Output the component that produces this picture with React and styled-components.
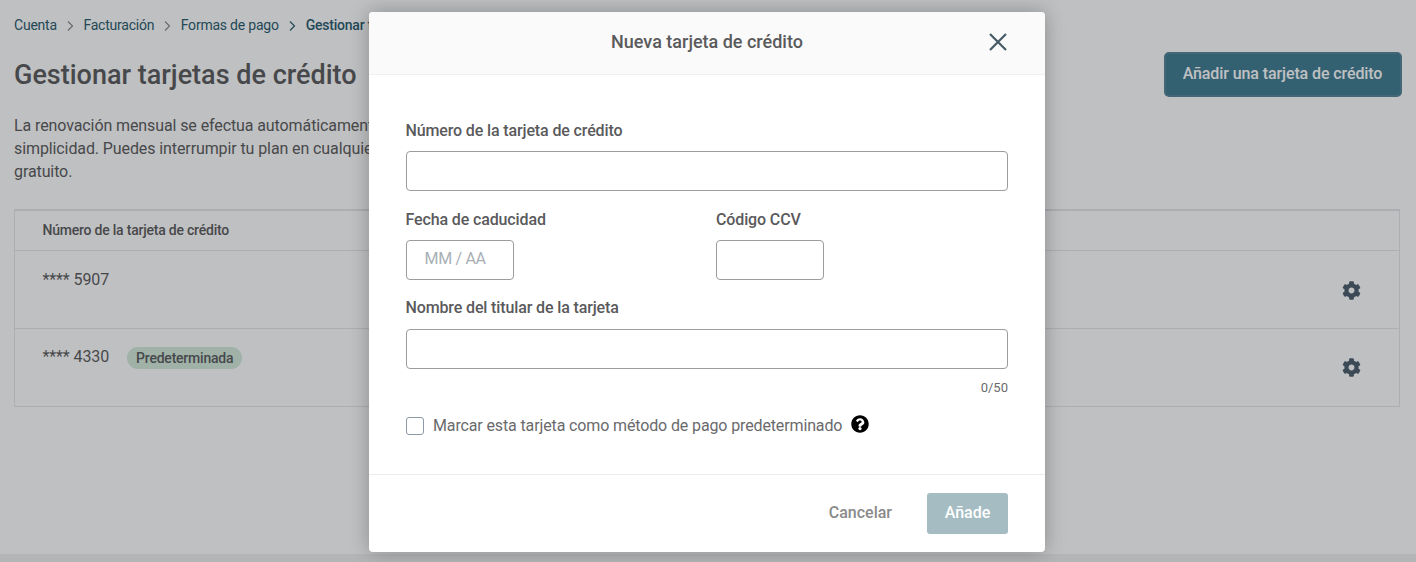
import React from "react";
import styled, { createGlobalStyle } from "styled-components";

const Global = createGlobalStyle`
  html, body { margin: 0; padding: 0; background: #fff; }
  body { font-family: Roboto, "Liberation Sans", sans-serif; color: #4f4f4f; }
  * { box-sizing: border-box; }
`;

const Page = styled.div`
  position: relative;
  width: 1416px;
  height: 562px;
  overflow: hidden;
  display: flex;
  flex-direction: column;
  background: #fff;
`;
const Main = styled.main`
  flex: 0 0 554px;
  padding: 17px 14px 0 14px;
`;
const BottomBand = styled.div`
  flex: 1;
  background: #f1f1f1;
`;
const Crumbs = styled.nav`
  display: flex;
  align-items: center;
  height: 17px;
  font-size: 14px;
  line-height: 17px;
  letter-spacing: -0.22px;
  color: #2f5f70;
`;
const Crumb = styled.span`
  font-weight: ${(p) => (p.$current ? 500 : 400)};
  white-space: nowrap;
`;
const Chevron = styled.svg`
  width: 7px;
  height: 10px;
  margin: 0 ${(p) => (p.$dark ? 10 : 9.5)}px 0 10px;
  fill: none;
  stroke: ${(p) => (p.$dark ? "#2f5f70" : "#8a8f92")};
  stroke-width: 1.2;
`;
const TitleRow = styled.div`
  display: flex;
  align-items: flex-start;
  justify-content: space-between;
  margin-top: 18px;
`;
const Title = styled.h1`
  margin: 7px 0 0;
  font-size: 27px;
  line-height: 32px;
  font-weight: 500;
  color: #5f5f61;
`;
const AddButton = styled.button`
  width: 238px;
  height: 45px;
  padding: 0 1px 2px 0;
  border: 2px solid #5a899a;
  border-radius: 5px;
  background: #468094;
  color: #fff;
  font: 500 16px Roboto, sans-serif;
  letter-spacing: -0.1px;
`;
const Intro = styled.p`
  margin: 17px 0 0;
  font-size: 16px;
  line-height: 23px;
  letter-spacing: -0.1px;
  color: #5f5f61;
`;
const Table = styled.section`
  width: 1386px;
  margin-top: 26px;
  border: 1px solid #e6e7ea;
  border-top-width: 2px;
`;
const HeadRow = styled.div`
  height: 40px;
  padding: 0 0 1px 27.5px;
  display: flex;
  align-items: center;
  font-size: 14px;
  font-weight: 500;
  letter-spacing: -0.22px;
  color: #5f5f61;
  border-bottom: 1px solid #e6e7ea;
`;
const Row = styled.div`
  height: ${(p) => (p.$last ? 77 : 78)}px;
  padding: ${(p) => (p.$last ? 18 : 19)}px 38px 0 27.5px;
  display: flex;
  justify-content: space-between;
  border-bottom: ${(p) => (p.$last ? "none" : "1px solid #e6e7ea")};
`;
const CardCell = styled.div`
  display: flex;
  align-items: flex-start;
  gap: 18px;
  font-size: 16px;
  line-height: 20px;
  letter-spacing: -0.1px;
  color: #5f5f61;
`;
const Badge = styled.span`
  height: 22px;
  padding: 0 9px;
  border-radius: 11px;
  background: #d6ecdc;
  font-size: 14px;
  font-weight: 500;
  line-height: 22px;
  letter-spacing: -0.22px;
  color: #5f5f61;
`;
const GearIcon = styled.svg`
  width: 19px;
  height: 19px;
  margin-top: 11px;
  fill: #50616f;
`;
const Overlay = styled.div`
  position: absolute;
  inset: 0;
  background: rgba(0, 5, 13, 0.25);
`;
const Modal = styled.div`
  position: absolute;
  left: 369px;
  top: 12px;
  width: 676px;
  height: 540px;
  display: flex;
  flex-direction: column;
  background: #fff;
  border-radius: 4px;
  box-shadow: 0 0 20px rgba(0, 0, 0, 0.28);
`;
const ModalHeader = styled.header`
  position: relative;
  flex: 0 0 63px;
  padding: 0 0 4px;
  display: flex;
  align-items: center;
  justify-content: center;
  background: #fafafa;
  border-bottom: 1px solid #f0f0f0;
  border-radius: 4px 4px 0 0;
  font-size: 18px;
  font-weight: 500;
  color: #5a5a5c;
`;
const Close = styled.svg`
  position: absolute;
  right: 38px;
  top: 21px;
  width: 18px;
  height: 18px;
  stroke: #455a64;
  stroke-width: 2.2;
  fill: none;
`;
const Body = styled.div`
  flex: 1;
  padding: 46px 37px 0 36.5px;
`;
const Label = styled.label`
  display: block;
  height: 20px;
  font-size: 16px;
  font-weight: 500;
  line-height: 20px;
  letter-spacing: -0.13px;
  color: #5a5a5c;
`;
const Input = styled.input`
  display: block;
  width: ${(p) => p.$w || "100%"};
  height: 40px;
  margin-top: ${(p) => p.$gap}px;
  padding: 0 18px 3px;
  border: 1px solid #9c9c9c;
  border-radius: 4px;
  outline: none;
  background: #fff;
  font: 400 16px Roboto, sans-serif;
  letter-spacing: -0.3px;
  &::placeholder { color: #a8b0b5; opacity: 1; }
`;
const Pair = styled.div`
  display: grid;
  grid-template-columns: 310.5px 1fr;
  margin-top: 19px;
`;
const NameField = styled.div`
  margin-top: 18px;
`;
const Counter = styled.div`
  margin-top: 11px;
  height: 16px;
  text-align: right;
  font-size: 13px;
  line-height: 16px;
  color: #6a6a6c;
`;
const CheckRow = styled.div`
  display: flex;
  align-items: center;
  margin-top: 19px;
  height: 20px;
  font-size: 16px;
  letter-spacing: -0.13px;
  color: #6a6a6c;
`;
const Check = styled.span`
  width: 18px;
  height: 18px;
  margin: 2px 9.5px 0 0;
  border: 1px solid #8d99a6;
  border-radius: 3px;
  background: #fff;
`;
const Help = styled.svg`
  width: 18px;
  height: 18px;
  margin: -3px 0 0 9px;
`;
const Footer = styled.footer`
  flex: 0 0 78px;
  display: flex;
  align-items: center;
  justify-content: flex-end;
  padding: 0 37px 0 0;
  border-top: 1px solid #ececec;
`;
const Cancel = styled.button`
  border: none;
  background: none;
  padding: 0 0 2px;
  margin-right: 35px;
  font: 500 16px Roboto, sans-serif;
  color: #8a8a8a;
`;
const Submit = styled.button`
  width: 81px;
  height: 41px;
  padding: 0 0 2px;
  border: none;
  border-radius: 3px;
  background: #a4bcc2;
  color: #fff;
  font: 500 16px Roboto, sans-serif;
`;

const GEAR = "M487.4 315.7l-42.6-24.6c4.3-23.2 4.3-47 0-70.2l42.6-24.6c4.9-2.8 7.1-8.6 5.5-14-11.1-35.6-30-67.8-54.7-94.6-3.8-4.1-10-5.1-14.8-2.3L380.8 110c-17.9-15.4-38.5-27.3-60.8-35.1V25.8c0-5.6-3.9-10.5-9.4-11.7-36.7-8.2-74.3-7.8-109.2 0-5.5 1.2-9.4 6.1-9.4 11.7V75c-22.2 7.9-42.8 19.8-60.8 35.1L88.7 85.5c-4.9-2.8-11-1.9-14.8 2.3-24.7 26.7-43.6 58.9-54.7 94.6-1.7 5.4.6 11.2 5.5 14L67.3 221c-4.3 23.2-4.3 47 0 70.2l-42.6 24.6c-4.9 2.8-7.1 8.6-5.5 14 11.1 35.6 30 67.8 54.7 94.6 3.8 4.1 10 5.1 14.8 2.3l42.6-24.6c17.9 15.4 38.5 27.3 60.8 35.1v49.2c0 5.6 3.9 10.5 9.4 11.7 36.7 8.2 74.3 7.8 109.2 0 5.5-1.2 9.4-6.1 9.4-11.7v-49.2c22.2-7.9 42.8-19.8 60.8-35.1l42.6 24.6c4.9 2.8 11 1.9 14.8-2.3 24.7-26.7 43.6-58.9 54.7-94.6 1.5-5.5-.7-11.3-5.6-14.1zM256 336c-44.1 0-80-35.9-80-80s35.9-80 80-80 80 35.9 80 80-35.9 80-80 80z";

const Gear = () => (
  <GearIcon viewBox="0 0 512 512"><path d={GEAR} /></GearIcon>
);
const Sep = ({ dark }) => (
  <Chevron viewBox="0 0 7 10" $dark={dark}><path d="M1 0.5 L5.5 5 L1 9.5" /></Chevron>
);

export default function App() {
  return (
    <Page>
      <Global />
      <Main>
        <Crumbs>
          <Crumb>Cuenta</Crumb><Sep />
          <Crumb>Facturación</Crumb><Sep />
          <Crumb>Formas de pago</Crumb><Sep dark />
          <Crumb $current>Gestionar tarjetas</Crumb>
        </Crumbs>
        <TitleRow>
          <Title>Gestionar tarjetas de crédito</Title>
          <AddButton>Añadir una tarjeta de crédito</AddButton>
        </TitleRow>
        <Intro>
          La renovación mensual se efectua automáticamente<br />
          simplicidad. Puedes interrumpir tu plan en cualquier<br />
          gratuito.
        </Intro>
        <Table>
          <HeadRow>Número de la tarjeta de crédito</HeadRow>
          <Row>
            <CardCell>**** 5907</CardCell>
            <Gear />
          </Row>
          <Row $last>
            <CardCell>**** 4330<Badge>Predeterminada</Badge></CardCell>
            <Gear />
          </Row>
        </Table>
      </Main>
      <BottomBand />
      <Overlay />
      <Modal>
        <ModalHeader>
          Nueva tarjeta de crédito
          <Close viewBox="0 0 18 18"><path d="M1 1 L17 17 M17 1 L1 17" /></Close>
        </ModalHeader>
        <Body>
          <Label>Número de la tarjeta de crédito</Label>
          <Input $gap={10} />
          <Pair>
            <div>
              <Label>Fecha de caducidad</Label>
              <Input $gap={10} $w="108px" placeholder="MM / AA" />
            </div>
            <div>
              <Label>Código CCV</Label>
              <Input $gap={10} $w="108px" />
            </div>
          </Pair>
          <NameField>
            <Label>Nombre del titular de la tarjeta</Label>
            <Input $gap={11} />
          </NameField>
          <Counter>0/50</Counter>
          <CheckRow>
            <Check />
            Marcar esta tarjeta como método de pago predeterminado
            <Help viewBox="0 0 512 512">
              <path d="M504 256c0 137-111 248-248 248S8 393 8 256 119 8 256 8s248 111 248 248zM262.700 90c-54.500 0-89.300 23-116.600 63.800-3.500 5.300-2.400 12.400 2.700 16.300l34.700 26.300c5.200 3.900 12.600 3 16.700-2.100 17.900-22.700 30.100-35.800 57.300-35.800 20.400 0 45.700 13.100 45.700 32.900 0 15-12.400 22.700-32.600 34-23.600 13.200-54.800 29.700-54.800 70.900V320c0 6.600 5.400 12 12 12h56c6.600 0 12-5.400 12-12v-1.300c0-28.600 83.400-29.700 83.400-107.100C379.200 153.400 318.800 90 262.700 90zM256 340c-25.400 0-46 20.600-46 46s20.600 46 46 46 46-20.600 46-46-20.600-46-46-46z" fill="#000" />
            </Help>
          </CheckRow>
        </Body>
        <Footer>
          <Cancel>Cancelar</Cancel>
          <Submit>Añade</Submit>
        </Footer>
      </Modal>
    </Page>
  );
}
